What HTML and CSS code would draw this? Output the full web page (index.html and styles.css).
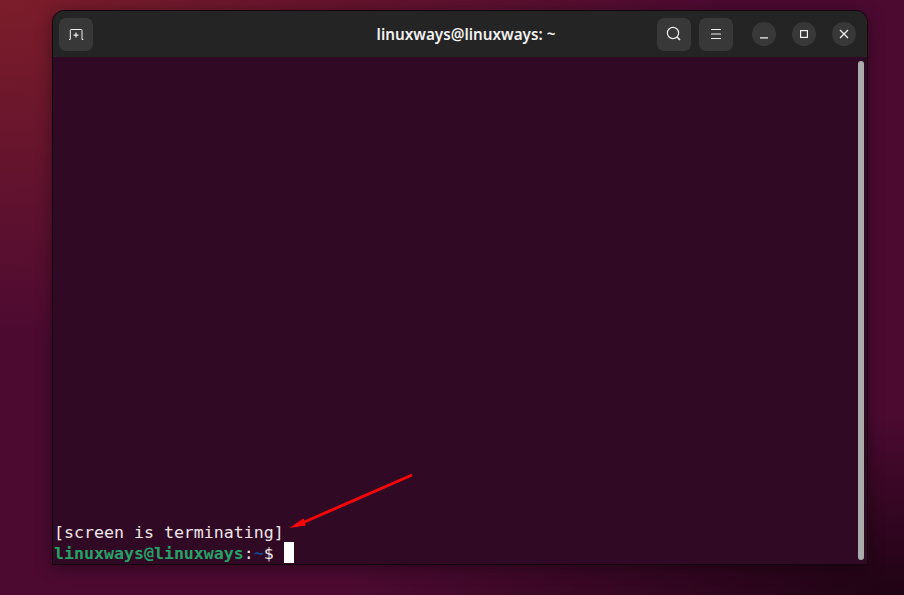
FILE: index.html
```
<!DOCTYPE html>
<html lang="en">
<head>
<meta charset="utf-8">
<title>linuxways@linuxways: ~</title>
<link rel="stylesheet" href="styles.css">
</head>
<body>
<div class="window">
  <header class="titlebar">
    <button class="btn square">
      <svg width="16" height="16" viewBox="0 0 16 16" fill="none" stroke="currentColor" stroke-width="1"><path d="M1 13.5H2.3V4.3Q2.3 3.5 3.1 3.5H13.2Q14 3.5 14 4.3V13.5H15.3"/><path d="M8 6.6V11.6M5.5 9.1H10.5" stroke-width="1.2"/></svg>
    </button>
    <div class="title">linuxways@linuxways: ~</div>
    <div class="actions">
      <button class="btn square">
        <svg width="16" height="16" viewBox="0 0 16 16" fill="none" stroke="currentColor" stroke-width="1.2"><circle cx="7" cy="7" r="5.6"/><path d="M11 11L14 14" stroke-width="1.6"/></svg>
      </button>
      <button class="btn square">
        <svg width="12" height="12" viewBox="0 0 12 12" stroke="currentColor" stroke-width="1.1"><path d="M1 1.5H11M1 6H11M1 10.5H11"/></svg>
      </button>
    </div>
    <div class="controls">
      <button class="btn round">
        <svg width="10" height="10" viewBox="0 0 10 10" stroke="currentColor" stroke-width="1.2"><path d="M1 8.9H9"/></svg>
      </button>
      <button class="btn round">
        <svg width="10" height="10" viewBox="0 0 10 10" fill="none" stroke="currentColor" stroke-width="1.2"><rect x="1.6" y="1.6" width="6.8" height="6.8"/></svg>
      </button>
      <button class="btn round">
        <svg width="10" height="10" viewBox="0 0 10 10" stroke="currentColor" stroke-width="1.3"><path d="M1 1L9 9M9 1L1 9"/></svg>
      </button>
    </div>
  </header>
  <main class="terminal">
    <div class="output">
      <div class="line">[screen is terminating]</div>
      <div class="line"><span class="user">linuxways@linuxways</span>:<span class="path">~</span>$ <span class="cursor"></span></div>
    </div>
    <div class="scrollbar"></div>
    <svg class="arrow" width="130" height="60" viewBox="0 0 130 60"><path d="M127 3L17 51" stroke="#f50505" stroke-width="3" fill="none"/><path d="M4.5 56L18.5 46.2L21 53.5Z" fill="#f50505"/></svg>
  </main>
</div>
</body>
</html>
```
FILE: styles.css
```
* { box-sizing: border-box; }
html, body { height: 100%; }
body {
  margin: 0;
  padding: 10px 36px 30px 52px;
  overflow: hidden;
  background:
    radial-gradient(ellipse 560px 180px at 100% 100%, #1f0314 0%, rgba(31,3,20,0) 100%),
    radial-gradient(ellipse 720px 340px at 0 0, #7c1d2a 0%, rgba(124,29,42,0) 100%),
    #4c0a31;
}
.window {
  height: 555px;
  display: flex;
  flex-direction: column;
  border: 1px solid #14060f;
  border-radius: 12px 12px 0 0;
  box-shadow: 0 3px 16px rgba(0,0,0,.4);
  overflow: hidden;
  background: #300a24;
}
.titlebar {
  height: 46px;
  flex: none;
  display: flex;
  align-items: center;
  padding: 0 7px 0 6px;
  background: #242424;
  color: #f2f2f2;
}
.title {
  flex: 1;
  text-align: center;
  font: 600 15.25px "Noto Sans", "Open Sans", sans-serif;
  padding-left: 182px;
  margin-bottom: 1px;
}
.btn {
  border: 0;
  padding: 0;
  display: flex;
  align-items: center;
  justify-content: center;
  background: #383838;
  color: #efefef;
}
.square { width: 34px; height: 33px; border-radius: 7px; }
.round { width: 24px; height: 24px; border-radius: 50%; }
.actions { display: flex; gap: 8px; margin-right: 19px; }
.controls { display: flex; gap: 16px; margin-right: 4px; }
.terminal {
  position: relative;
  flex: 1;
  display: flex;
  align-items: flex-end;
  background: #300a24;
}
.output {
  padding: 0 0 1px 1px;
  font: 16.6px/23px "DejaVu Sans Mono", monospace;
  color: #efe6ea;
}
.line { height: 21px; white-space: pre; }
.user { color: #26a269; font-weight: 700; }
.path { color: #12488b; font-weight: 700; }
.cursor {
  display: inline-block;
  width: 10px;
  height: 21px;
  background: #fff;
  vertical-align: top;
}
.scrollbar {
  position: absolute;
  top: 4px;
  bottom: 4px;
  right: 3px;
  width: 6px;
  border-radius: 3px;
  background: #ababab;
}
.arrow { position: absolute; left: 232px; bottom: 32px; }
```
